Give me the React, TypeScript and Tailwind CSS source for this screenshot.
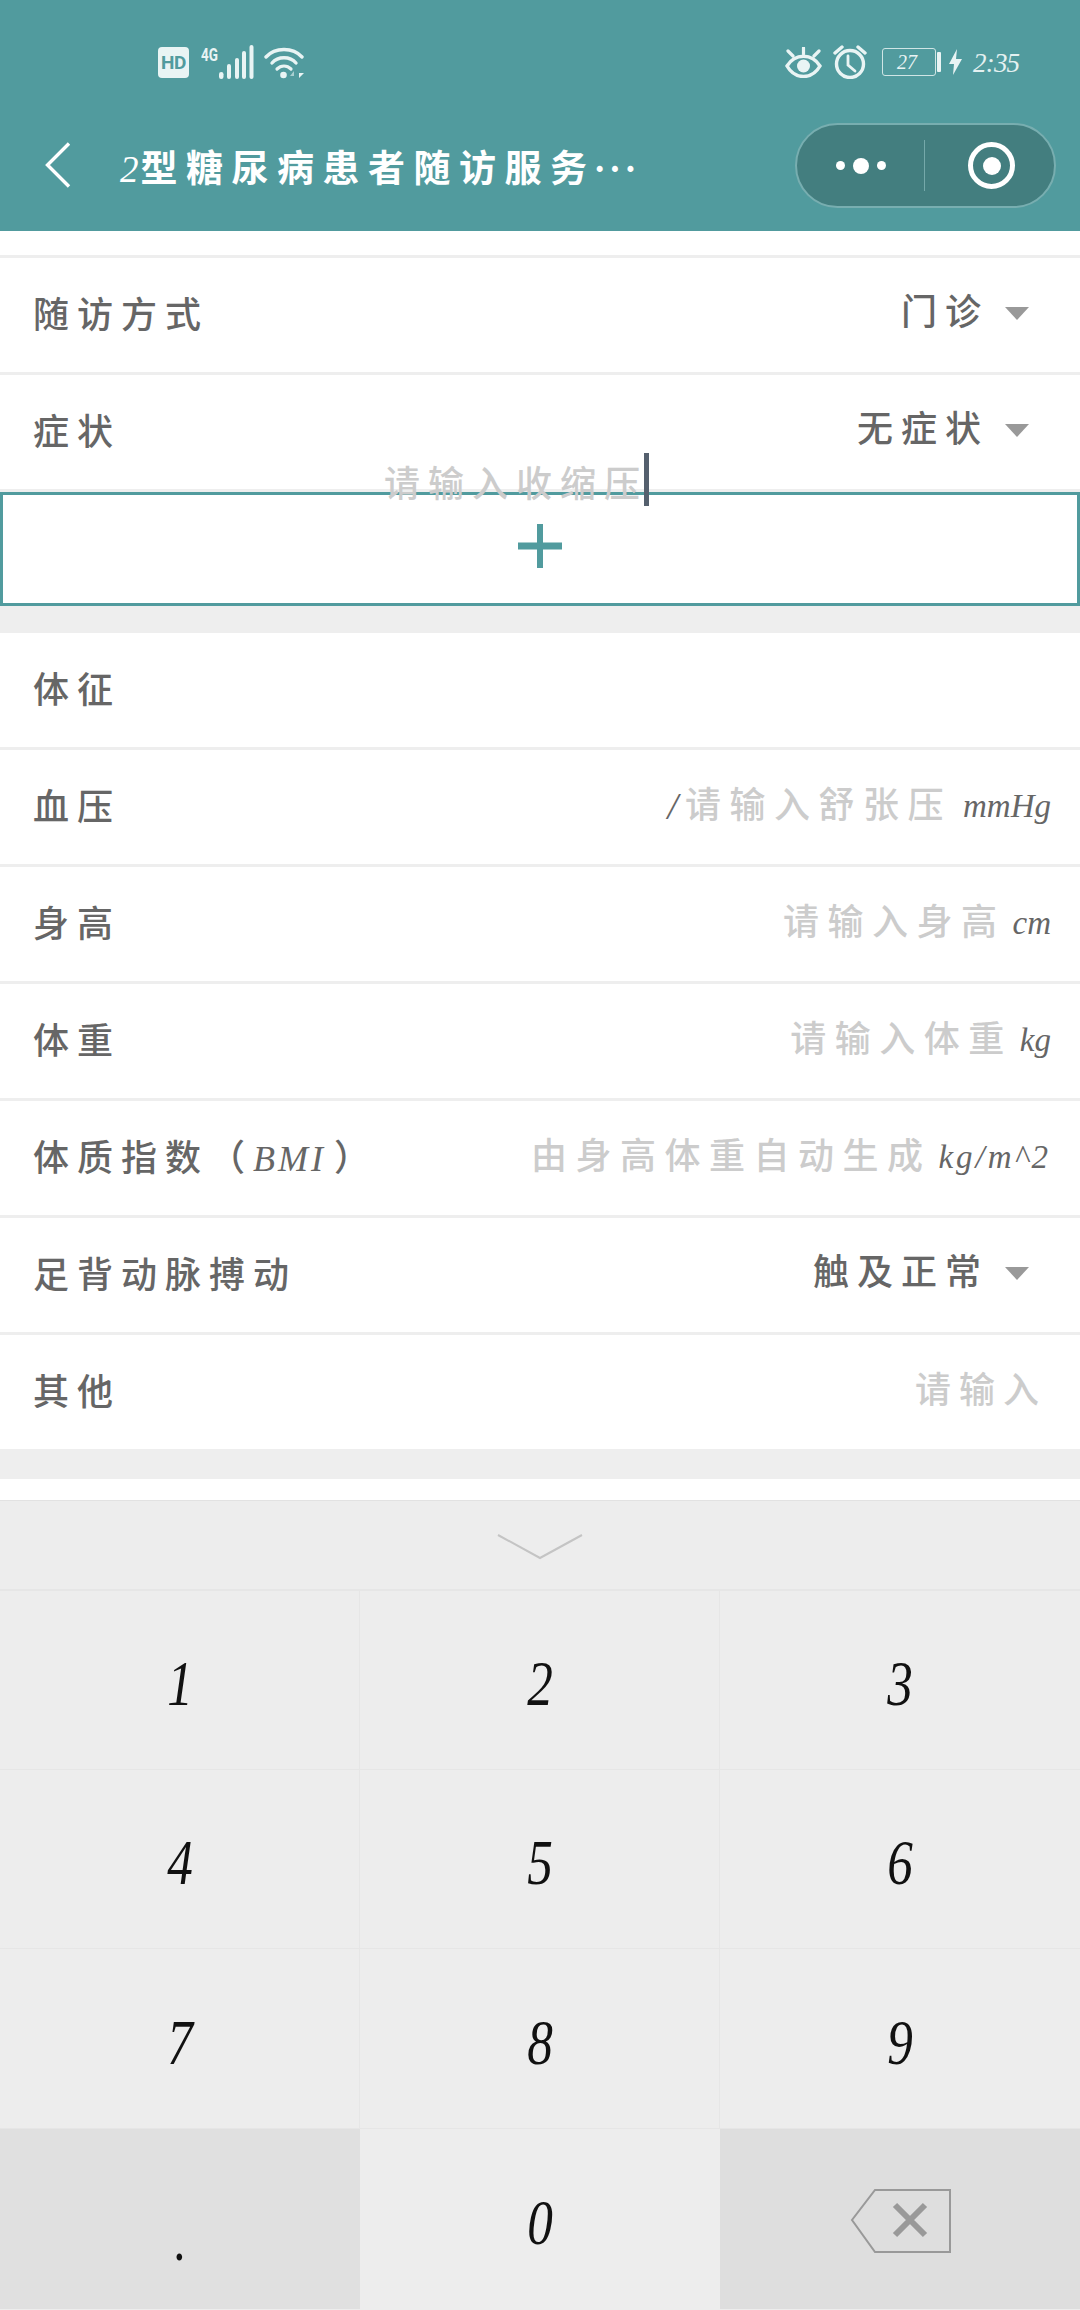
import React from "react";

const Caret = () => (
  <span className="mb-[3px] ml-[16px] h-0 w-0 border-x-[12px] border-t-[13px] border-x-transparent border-t-[#999999]" />
);

const Row = ({
  label,
  children,
  h = "h-[117px]",
  border = true,
}: {
  label: React.ReactNode;
  children?: React.ReactNode;
  h?: string;
  border?: boolean;
}) => (
  <div
    className={`flex ${h} shrink-0 items-center justify-between bg-white pl-[33px] ${
      border ? "border-b-[3px] border-[#eeeeee]" : ""
    }`}
  >
    <span className="pt-[2px] text-[36px] font-medium leading-none tracking-[8px] text-[#666666]">{label}</span>
    {children}
  </div>
);

const Select = ({ value }: { value: string }) => (
  <div className="flex items-center pr-[51px]">
    <span className="pb-[4px] text-[36px] font-medium leading-none tracking-[8px] text-[#666666]">{value}</span>
    <Caret />
  </div>
);

const Input = ({ ph, unit, slash, wide }: { ph: string; unit?: string; slash?: boolean; wide?: boolean }) => (
  <div className="flex items-center pb-[2px] pr-[29px]">
    {slash && <span className="mr-[7px] text-[38px] italic leading-none text-[#666666]">/</span>}
    <span className="text-[36px] font-medium leading-none tracking-[8.5px] text-[#cccccc]">{ph}</span>
    {unit && (
      <span
        className={`${slash ? "ml-[11px]" : "ml-[7px]"} text-[33px] italic leading-none text-[#666666] ${
          wide ? "tracking-[3px]" : ""
        }`}
      >
        {unit}
      </span>
    )}
  </div>
);

const Key = ({ n, bg = "bg-[#ededed]", right = true }: { n: string; bg?: string; right?: boolean }) => (
  <div
    className={`flex items-center justify-center pt-[8px] ${bg} ${right ? "border-r border-[#e6e6e6]" : ""}`}
  >
    <span className="inline-block scale-x-[0.8] text-[64px] italic leading-none text-[#111111]">{n}</span>
  </div>
);

const StatusLeft = () => (
  <div className="flex items-center pl-[158px]">
    <div className="flex h-[31px] w-[31px] items-center justify-center rounded-[4px] bg-[#e9f4f4] font-['Roboto',sans-serif] text-[19px] font-bold leading-none tracking-[-0.5px] text-[#519b9e]">
      HD
    </div>
    <div className="ml-[12px] mb-[14px] w-[19px] origin-left scale-x-75 font-['Roboto',sans-serif] text-[18px] font-bold leading-none text-[#e9f4f4]">
      4G
    </div>
    <svg width="35" height="34" viewBox="0 0 35 34" className="-ml-[1px]" fill="#e9f4f4">
      <rect x="0" y="27" width="4.5" height="7" rx="2.2" />
      <rect x="8" y="19" width="4" height="15" rx="2" />
      <rect x="16" y="13" width="4" height="21" rx="2" />
      <rect x="23" y="6" width="4" height="28" rx="2" />
      <rect x="30.5" y="0" width="4" height="34" rx="2" />
    </svg>
    <svg width="41" height="33" viewBox="0 0 41 33" className="ml-[10px]" fill="none" stroke="#e9f4f4" strokeLinecap="round">
      <path d="M2 11 C11 1 29 1 38 11" strokeWidth="3.4" />
      <path d="M8 17 C14 10 26 10 32 17" strokeWidth="3.4" />
      <path d="M13 23 C17 19 23 19 27 23" strokeWidth="3.2" />
      <circle cx="19.5" cy="29" r="3.3" fill="#e9f4f4" stroke="none" />
      <path d="M30 25 L26 30 H30 Z" fill="#a9d0d1" stroke="none" />
      <path d="M35 25 V32 L40 27 H35 Z" fill="#e9f4f4" stroke="none" />
    </svg>
  </div>
);

const StatusRight = () => (
  <div className="flex items-center pr-[62px]">
    <svg width="37" height="31" viewBox="0 0 37 31" fill="none" stroke="#e9f4f4" strokeLinecap="round" className="mr-[-1px]">
      <path d="M2 19 C10 6 27 6 35 19 C27 33 10 33 2 19 Z" strokeWidth="3.4" />
      <circle cx="18.5" cy="19" r="6.5" fill="#e9f4f4" stroke="none" />
      <path d="M18.5 1 V7 M3 4 L8 9 M34 4 L29 9" strokeWidth="3.2" />
    </svg>
    <svg width="34" height="34" viewBox="0 0 34 34" className="ml-[12px]" fill="none" stroke="#e9f4f4" strokeLinecap="round">
      <circle cx="17" cy="19" r="13.5" strokeWidth="3.4" />
      <path d="M15 11 V20 L22 26" strokeWidth="2.8" />
      <path d="M2 8 L9 2 M32 8 L25 2" strokeWidth="3.4" />
    </svg>
    <div className="ml-[15px] mr-[-1px] flex h-[28px] w-[54px] items-center justify-center rounded-[3px] border-[1.5px] border-[#cfe5e5] pr-[4px] text-[20px] italic leading-none text-[#e9f4f4]">
      27
    </div>
    <div className="ml-[2px] h-[20px] w-[4px] rounded-[1px] bg-[#e9f4f4]" />
    <svg width="13" height="26" viewBox="0 0 13 26" className="ml-[8px]" fill="#e9f4f4">
      <path d="M8 0 L0 15 H5 L4 26 L13 10 H7 Z" />
    </svg>
    <div className="ml-[11px] w-[45px] whitespace-nowrap pt-[2px] text-[27px] italic leading-none tracking-[-0.8px] text-[#e4f1f1]">
      2:35
    </div>
  </div>
);

export default function App() {
  return (
    <div className="flex h-[2310px] w-[1080px] flex-col overflow-hidden bg-[#eeeeee] font-['Liberation_Serif','Noto_Sans_CJK_SC',serif]">
      <header className="flex h-[231px] shrink-0 flex-col bg-[#519b9e]">
        <div className="flex h-[123px] shrink-0 items-start justify-between pt-[45px]">
          <StatusLeft />
          <StatusRight />
        </div>
        <div className="flex h-[85px] items-center justify-between pl-[45px] pr-[24px]">
          <div className="flex items-center">
            <svg width="26" height="46" viewBox="0 0 26 46" fill="none" stroke="#ffffff" strokeWidth="3.4" className="mt-[-1px]">
              <path d="M24 1.5 L2.5 23 L24 44.5" />
            </svg>
            <div className="ml-[49px] mt-[8px] whitespace-nowrap text-[37px] font-bold leading-none tracking-[8.5px] text-white">
              <span className="font-normal italic tracking-[2px]">2</span>型糖尿病患者随访服务
              <span className="-ml-[2px] tracking-[3px]">···</span>
            </div>
          </div>
          <div className="flex h-[85px] w-[261px] items-center rounded-full border-2 border-[#78aeb0] bg-[#437e7f]">
            <div className="flex h-[51px] w-[128px] items-center justify-center gap-[8px] border-r border-[#75a9aa]">
              <span className="h-[9px] w-[9px] rounded-full bg-white" />
              <span className="h-[16px] w-[16px] rounded-full bg-white" />
              <span className="h-[9px] w-[9px] rounded-full bg-white" />
            </div>
            <div className="flex flex-1 items-center justify-center pl-[4px]">
              <div className="flex h-[47px] w-[47px] items-center justify-center rounded-full border-[5.5px] border-white">
                <span className="h-[18px] w-[18px] rounded-full bg-white" />
              </div>
            </div>
          </div>
        </div>
      </header>

      <div className="h-[27px] shrink-0 border-b-[3px] border-[#eeeeee] bg-white" />
      <Row label="随访方式">
        <Select value="门诊" />
      </Row>
      <Row label="症状">
        <Select value="无症状" />
      </Row>

      <div className="relative flex h-[114px] shrink-0 items-center justify-center border-[3px] border-[#519b9e] bg-white pb-[7px]">
        <svg width="44" height="44" viewBox="0 0 44 44" fill="#519b9e">
          <rect x="19" y="0" width="6" height="44" />
          <rect x="0" y="18.5" width="44" height="7" />
        </svg>
        <div className="absolute left-[381px] top-[-42px] flex h-[53px] items-center">
          <span className="whitespace-nowrap pt-[10px] text-[36px] font-medium leading-none tracking-[8px] text-[#cccccc]">
            请输入收缩压
          </span>
          <span className="-ml-[4px] h-[53px] w-[5px] bg-[#55606e]" />
        </div>
      </div>

      <div className="mt-[27px]">
        <Row label="体征" />
        <Row label="血压">
          <Input ph="请输入舒张压" unit="mmHg" slash />
        </Row>
        <Row label="身高">
          <Input ph="请输入身高" unit="cm" />
        </Row>
        <Row label="体重">
          <Input ph="请输入体重" unit="kg" />
        </Row>
        <Row
          label={
            <>
              体质指数（<span className="mr-[8px] italic tracking-[3px]">BMI</span>）
            </>
          }
        >
          <Input ph="由身高体重自动生成" unit="kg/m^2" wide />
        </Row>
        <Row label="足背动脉搏动">
          <Select value="触及正常" />
        </Row>
        <Row label="其他" h="h-[114px]" border={false}>
          <div className="pb-[2px] pr-[33px]">
            <span className="text-[36px] font-medium leading-none tracking-[8px] text-[#cccccc]">请输入</span>
          </div>
        </Row>
      </div>

      <div className="mt-[30px] h-[21px] shrink-0 bg-white" />

      <div className="flex flex-1 flex-col border-t border-[#e2e2e2] bg-[#ededed]">
        <div className="flex h-[90px] shrink-0 items-center justify-center border-b-2 border-[#e6e6e6] pt-[4px]">
          <svg width="86" height="26" viewBox="0 0 86 26" fill="none" stroke="#c4c4c4" strokeWidth="2">
            <path d="M1 1 L43 24 L85 1" />
          </svg>
        </div>
        <div className="grid h-[718px] grid-cols-[360px_360px_360px] grid-rows-[179px_179px_180px_180px]">
          {["1", "2", "3", "4", "5", "6", "7", "8", "9"].map((n, i) => (
            <div key={n} className="grid border-b border-[#e6e6e6]">
              <Key n={n} right={i % 3 !== 2} />
            </div>
          ))}
          <div className="flex items-center justify-center bg-[#e0e0e0]">
            <span className="mt-[42px] inline-block scale-x-[0.8] text-[60px] italic leading-none text-[#111111]">.</span>
          </div>
          <Key n="0" right={false} />
          <div className="flex items-center justify-center bg-[#dedede] pr-[98px] pt-[2px]">
            <svg width="102" height="65" viewBox="0 0 102 65" fill="none" stroke="#999999" className="ml-[99px]">
              <path d="M25 2 H100 V64 H25 L2 32 Z" strokeWidth="2" />
              <path d="M45 17 L75 47 M75 17 L45 47" strokeWidth="6" />
            </svg>
          </div>
        </div>
      </div>
    </div>
  );
}
